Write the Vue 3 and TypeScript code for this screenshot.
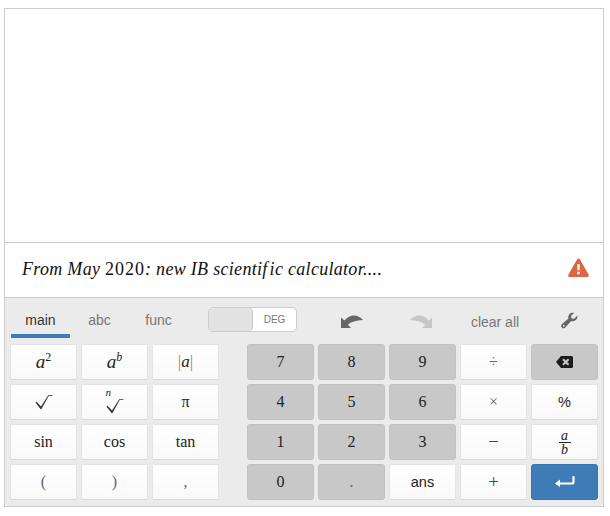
<script setup lang="ts">
interface Key { id: string; kind: 'white' | 'gray' | 'blue'; text?: string; cls?: string; }
const left: Key[] = [
  { id: 'sq', kind: 'white' }, { id: 'pow', kind: 'white' }, { id: 'abs', kind: 'white' },
  { id: 'sqrt', kind: 'white' }, { id: 'nroot', kind: 'white' }, { id: 'pi', kind: 'white', text: 'π' },
  { id: 'sin', kind: 'white', text: 'sin' }, { id: 'cos', kind: 'white', text: 'cos' }, { id: 'tan', kind: 'white', text: 'tan' },
  { id: 'lp', kind: 'white', text: '(', cls: 'light' }, { id: 'rp', kind: 'white', text: ')', cls: 'light' }, { id: 'comma', kind: 'white', text: ',', cls: 'light' },
];
const right: Key[] = [
  { id: '7', kind: 'gray', text: '7' }, { id: '8', kind: 'gray', text: '8' }, { id: '9', kind: 'gray', text: '9' },
  { id: 'div', kind: 'white', text: '÷', cls: 'light' }, { id: 'back', kind: 'gray' },
  { id: '4', kind: 'gray', text: '4' }, { id: '5', kind: 'gray', text: '5' }, { id: '6', kind: 'gray', text: '6' },
  { id: 'mul', kind: 'white', text: '×', cls: 'light' }, { id: 'pct', kind: 'white', text: '%', cls: 'sans' },
  { id: '1', kind: 'gray', text: '1' }, { id: '2', kind: 'gray', text: '2' }, { id: '3', kind: 'gray', text: '3' },
  { id: 'minus', kind: 'white', text: '−', cls: 'big' }, { id: 'frac', kind: 'white' },
  { id: '0', kind: 'gray', text: '0' }, { id: 'dot', kind: 'gray', text: '.', cls: 'light' }, { id: 'ans', kind: 'white', text: 'ans', cls: 'sans' },
  { id: 'plus', kind: 'white', text: '+', cls: 'big' }, { id: 'enter', kind: 'blue' },
];
</script>

<template>
  <div class="page">
    <div class="calc">
      <div class="display"></div>
      <div class="notice">
        <p class="msg"><i>From May </i><span class="year">2020</span><i>: new IB scientif<span class="gap">ic</span> calculator....</i></p>
        <svg class="warn" viewBox="0 0 22 20" width="21" height="19">
          <path d="M11 0.5c.7 0 1.2.4 1.6 1l8.9 15.8c.8 1.4-.1 2.7-1.6 2.7H2.100c-1.500 0-2.400-1.300-1.600-2.700L9.400 1.500c.4-.6.9-1 1.600-1z" fill="#dd6541"/>
          <path d="M9.500 6.500h3l-.4 6.500h-2.200zM9.600 14.400h2.800v2.700H9.600z" fill="#fff"/>
        </svg>
      </div>
      <div class="keypad">
        <div class="toolbar">
          <div class="tabs">
            <span class="tab active">main</span>
            <span class="tab">abc</span>
            <span class="tab">func</span>
          </div>
          <div class="toggle"><span class="knob"></span><span class="deg">DEG</span></div>
          <button class="tool undo">
            <svg viewBox="0 0 22 14" width="22" height="14"><path d="M0 3.500V14h10L6.800 10.800C10 7.800 15 6.300 22 6 17.500 .8 9.500 -.8 3.400 6.500z" fill="#666"/></svg>
          </button>
          <button class="tool redo">
            <svg viewBox="0 0 22 14" width="22" height="14"><path d="M22 3.500V14H12L15.200 10.800C12 7.800 7 6.300 0 6 4.500 .8 12.500 -.8 18.600 6.500z" fill="#c6c6c6"/></svg>
          </button>
          <button class="tool clear">clear all</button>
          <button class="tool wrench">
            <svg viewBox="0 0 18 18" width="17" height="17"><path d="M17.300 3.700c.4 2.300-.4 4.300-2.300 5.400-1.500.8-3 .8-4.300.3L4.600 16.300c-1.200 1.300-3 1.100-3.800 0-.9-1-.8-2.500.3-3.500L7.900 7c-.6-1.600-.3-3.300.9-4.700C10.100.9 12 .4 14 1l-3.400 3 .5 2.700 2.600.6z" fill="#666"/><circle cx="3" cy="14.500" r="1" fill="#ebebeb"/></svg>
          </button>
        </div>
        <div class="keys">
          <div class="grid left">
            <button v-for="k in left" :key="k.id" class="key" :class="[k.kind, k.cls]">
              <template v-if="k.text">{{ k.text }}</template>
              <span v-else-if="k.id === 'sq'" class="math"><i>a</i><sup>2</sup></span>
              <span v-else-if="k.id === 'pow'" class="math"><i>a</i><sup><i>b</i></sup></span>
              <span v-else-if="k.id === 'abs'" class="math abs"><span class="bar">|</span><i>a</i><span class="bar">|</span></span>
              <svg v-else-if="k.id === 'sqrt'" viewBox="0 0 18 16" width="18" height="16"><path d="M0.500 8.500 1.500 7.800 6 12.500 13.200 1.200H17.500V2H13.700L6.300 15.300H5.700z" fill="#333"/></svg>
              <span v-else-if="k.id === 'nroot'" class="nroot"><i>n</i><svg viewBox="0 0 18 16" width="18" height="16"><path d="M0.500 8.500 1.500 7.800 6 12.500 13.200 1.200H17.500V2H13.700L6.300 15.300H5.700z" fill="#333"/></svg></span>
            </button>
          </div>
          <div class="grid right">
            <button v-for="k in right" :key="k.id" class="key" :class="[k.kind, k.cls]">
              <template v-if="k.text">{{ k.text }}</template>
              <svg v-else-if="k.id === 'back'" viewBox="0 0 17 12" width="17" height="12"><path fill-rule="evenodd" d="M5 0H15.500A1.500 1.500 0 0 1 17 1.500v9a1.500 1.500 0 0 1-1.500 1.500H5L0 6zM7.700 2.500 6.300 3.900 8.400 6 6.300 8.100l1.400 1.400L9.800 7.400l2.100 2.100 1.400-1.400L11.200 6l2.100-2.100-1.400-1.400L9.800 4.600z" fill="#1c1c1c"/></svg>
              <span v-else-if="k.id === 'frac'" class="frac"><i>a</i><i class="den">b</i></span>
              <svg v-else-if="k.id === 'enter'" viewBox="0 0 21 12" width="21" height="12"><path d="M19.500 1v5a1.500 1.500 0 0 1-1.500 1.500H3" fill="none" stroke="#fff" stroke-width="2.200" stroke-linecap="round"/><path d="M6 3.500 1 7.500 6 11z" fill="#fff"/></svg>
            </button>
          </div>
        </div>
      </div>
    </div>
  </div>
</template>

<style scoped>
.page { padding: 8px 6px 0 4px; box-sizing: border-box; width: 610px; }
.calc { width: 600px; box-sizing: border-box; border: 1px solid #ccc; background: #fff; }
.display { height: 233px; border-bottom: 1px solid #ccc; }
.notice { height: 54px; box-sizing: border-box; display: flex; align-items: center; justify-content: space-between; padding: 0 14px 2px 17px; }
.msg { margin: 0; font: 18px "Liberation Serif", serif; letter-spacing: .3px; color: #111; }
.year { letter-spacing: 1px; }
.gap { margin-left: 2px; }
.warn { display: block; margin-bottom: 3px; }
.keypad { background: #ebebeb; border-top: 1px solid #ccc; padding: 0 5px 6px 5px; height: 209px; box-sizing: border-box; }
.toolbar { height: 46px; display: flex; align-items: flex-start; font: 14px "Liberation Sans", sans-serif; color: #777; }
.tabs { display: flex; margin-left: 1px; flex: none; }
.tab { width: 59px; height: 40px; box-sizing: border-box; padding-top: 14px; text-align: center; line-height: 16px; }
.tab.active { color: #333; border-bottom: 4px solid #3f7cb7; }
.toggle { flex: none; margin: 9px 0 0 20px; width: 89px; height: 25px; box-sizing: border-box; border: 1px solid #ccc; border-radius: 5px; background: #fff; display: flex; overflow: hidden; }
.knob { width: 43px; background: #e2e2e2; border-right: 1px solid #c8c8c8; border-radius: 4px; }
.deg { flex: 1; text-align: center; font-size: 10px; line-height: 24px; color: #777; }
.tool { flex: none; border: 0; background: none; padding: 0; height: 25px; margin-top: 10px; display: flex; align-items: center; justify-content: center; font: inherit; color: #777; }
.undo { width: 68px; margin-left: 21px; }
.redo { width: 70px; }
.clear { width: 78px; padding-top: 3px; }
.wrench { width: 62px; margin-left: 4px; }
.keys { display: flex; justify-content: space-between; }
.grid { display: grid; gap: 4px; grid-auto-rows: 36px; }
.grid.left { grid-template-columns: repeat(3, 67px); }
.grid.right { grid-template-columns: repeat(5, 67px); }
.key { padding: 0; display: flex; align-items: center; justify-content: center; box-sizing: border-box; font: 16px "Liberation Serif", serif; color: #222; border: 1px solid #e4e4e4; border-bottom-color: #d8d8d8; border-radius: 2px; }
.key.white { background: linear-gradient(#fff, #f9f9f9); }
.key.gray { background: #c8c8c8; border-color: #c2c2c2; border-radius: 3px; }
.key.blue { background: #3f7cb7; border-color: #3a75ad; border-radius: 3px; }
.key.sans { font: 14.500px "Liberation Sans", sans-serif; }
.key.light { color: #666; }
.key.big { font-size: 19px; color: #444; }
.math { font-size: 19px; }
.math sup { font-size: 12px; line-height: 0; vertical-align: 7px; }
.abs { font-size: 17px; }
.bar { color: #888; }
.nroot { position: relative; display: block; width: 18px; height: 24px; padding-top: 8px; box-sizing: border-box; }
.nroot i { position: absolute; left: 0; top: -4px; font-size: 11px; }
.nroot svg { display: block; }
.frac { display: flex; flex-direction: column; align-items: center; font-size: 14px; line-height: 13px; }
.frac .den { border-top: 1px solid #222; width: 12px; text-align: center; }
</style>
